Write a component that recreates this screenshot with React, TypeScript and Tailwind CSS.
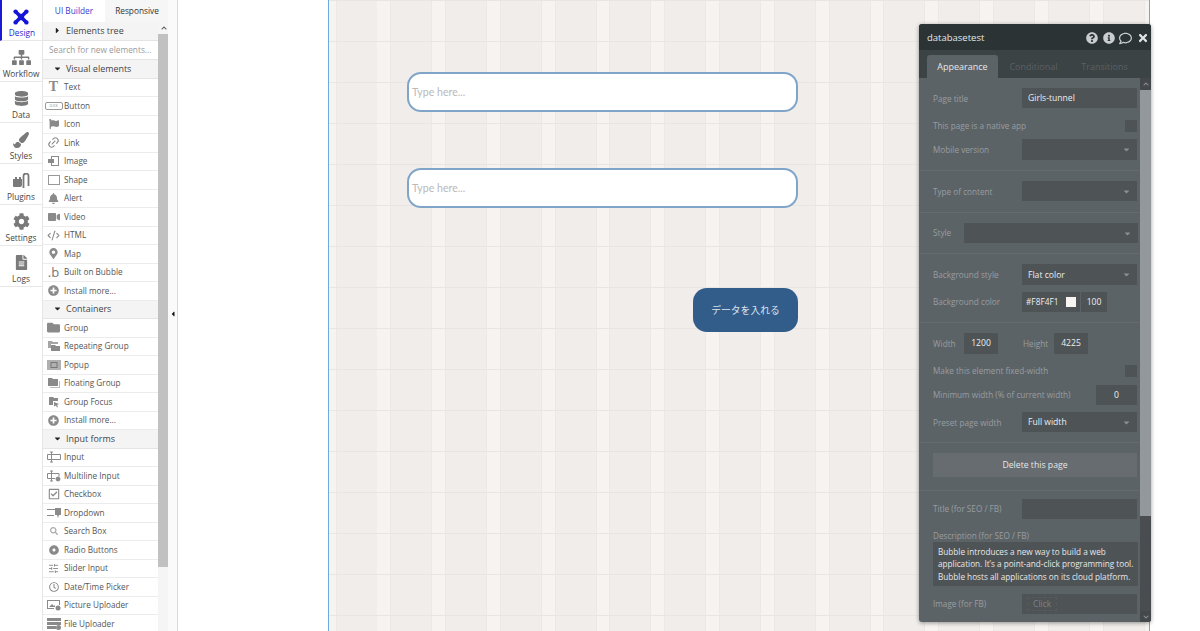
import React from "react";
import { FaCog, FaDatabase, FaFileAlt, FaSitemap, FaPaintBrush, FaFlag, FaBell, FaVideo, FaMapMarkerAlt, FaPlusCircle, FaFolder, FaDotCircle, FaRegClock, FaQuestionCircle, FaInfoCircle, FaTimes, FaCaretDown, FaCaretRight, FaCaretLeft, FaRegComment, FaSearch, FaRegCheckSquare, FaChevronUp, FaChevronDown } from "react-icons/fa";
import { Link2, CodeXml, SlidersHorizontal } from "lucide-react";

const Svg = ({ children }: { children: React.ReactNode }) => (
  <svg width="14" height="12" viewBox="0 0 14 12" fill="#8a8a8a">
    {children}
  </svg>
);

const ImageIcon = () => (
  <Svg>
    <path d="M4 1h8v10H4V8h1v2h6V2H5v2H4z" />
    <path d="M1 4h6v4H1z" />
  </Svg>
);
const FolderStack = () => (
  <Svg>
    <path d="M1 1h4l1 1h5v2H4v4H1z" fill="#a5a5a5" />
    <path d="M4 5h4l1 1h4v5H4z" />
  </Svg>
);
const PopupIcon = () => (
  <Svg>
    <rect x="0" y="1" width="14" height="10" fill="#b0b0b0" />
    <rect x="4" y="3.5" width="6" height="5" fill="none" stroke="#777" />
  </Svg>
);
const FloatingIcon = () => (
  <Svg>
    <path d="M1 1h4l1 1h5v7H1z" />
    <path d="M12 4h1v7H3v-1h9z" fill="#bbb" />
  </Svg>
);
const FocusIcon = () => (
  <Svg>
    <path d="M2 1h4l1 1h4v3H6v4H2z" />
    <path d="M7 6l5 2-2 1 1 2-1 .5-1-2-2 1z" />
  </Svg>
);
const InputIcon = () => (
  <svg width="14" height="12" viewBox="0 0 14 12" fill="none" stroke="#8a8a8a">
    <path d="M4.5 1v10M3 1h3M3 11h3M5 3.5h8.5v5H5M4 3.5H.5v5H4" />
  </svg>
);
const MultilineIcon = () => (
  <svg width="14" height="12" viewBox="0 0 14 12" fill="none" stroke="#8a8a8a">
    <path d="M4.5 1v10M3 1h3M3 11h3M5 3.5h7v3M4 3.5H.5v5H4M5 8.5h3" />
    <circle cx="11" cy="9" r="2" fill="#8a8a8a" />
  </svg>
);
const DropdownIcon = () => (
  <svg width="14" height="12" viewBox="0 0 14 12" fill="#8a8a8a">
    <path d="M0 2h8v1H0zM0 8h7v1H0zM8 1h6v7h-2l-1 3-1-3H8z" />
  </svg>
);
const PictureIcon = () => (
  <svg width="14" height="12" viewBox="0 0 14 12" fill="#8a8a8a">
    <path d="M0 1h13v5h-1V2H1v7h6v1H0z" />
    <path d="M2 8l3-3 2 2 1-1v2H2z" />
    <circle cx="11" cy="9" r="2.5" />
  </svg>
);
const FileIcon = () => (
  <svg width="14" height="12" viewBox="0 0 14 12" fill="#8a8a8a">
    <path d="M0 0h14v3H0zM0 4h14v3H0zM0 8h9v3H0z" />
    <circle cx="11.5" cy="9.5" r="2.5" />
  </svg>
);
const PlugIcon = () => (
  <svg width="17" height="16" viewBox="0 0 17 16" fill="#7a7a7a">
    <path d="M0 6h2V4h2v2h2V4h2v2h1v6a2 2 0 0 1-2 2H1a1 1 0 0 1-1-1z" />
    <path d="M10.5 15V3a2.4 2.4 0 0 1 5 0v10" fill="none" stroke="#7a7a7a" strokeWidth="1.8" />
  </svg>
);
const DesignIcon = () => (
  <svg width="16" height="16" viewBox="0 0 16 16" fill="#1515d8" stroke="#1515d8" className="mt-[1px] -ml-[2px]">
    <path d="M3 3l10 10M13 3L3 13" strokeWidth="3.6" />
    <circle cx="2.6" cy="2.6" r="2.2" stroke="none" />
    <circle cx="13.4" cy="2.6" r="2.2" stroke="none" />
    <circle cx="2.6" cy="13.4" r="2.2" stroke="none" />
    <circle cx="13.4" cy="13.4" r="2.2" stroke="none" />
    <circle cx="8" cy="8" r="3.2" stroke="none" />
  </svg>
);

const rail = [
  { label: "Design", icon: <DesignIcon />, active: true },
  { label: "Workflow", icon: <FaSitemap size={19} color="#7a7a7a" /> },
  { label: "Data", icon: <FaDatabase size={15} color="#7a7a7a" /> },
  { label: "Styles", icon: <FaPaintBrush size={16} color="#7a7a7a" /> },
  { label: "Plugins", icon: <PlugIcon /> },
  { label: "Settings", icon: <FaCog size={17} color="#7a7a7a" /> },
  { label: "Logs", icon: <FaFileAlt size={15} color="#7a7a7a" /> },
];

const gray = "#8a8a8a";
const visual = [
  { label: "Text", icon: <span className="font-['Liberation_Serif',serif] text-[14px] leading-none font-bold text-[#8a8a8a]">T</span> },
  { label: "Button", wide: true },
  { label: "Icon", icon: <FaFlag size={10} color={gray} /> },
  { label: "Link", icon: <Link2 size={13} color={gray} className="-rotate-45" /> },
  { label: "Image", icon: <ImageIcon /> },
  { label: "Shape", shape: true },
  { label: "Alert", icon: <FaBell size={11} color={gray} /> },
  { label: "Video", icon: <FaVideo size={12} color={gray} /> },
  { label: "HTML", icon: <CodeXml size={13} color={gray} /> },
  { label: "Map", icon: <FaMapMarkerAlt size={11} color={gray} /> },
  { label: "Built on Bubble", icon: <span className="text-[13px] leading-none text-[#777]">.b</span> },
  { label: "Install more...", icon: <FaPlusCircle size={11} color={gray} /> },
];
const containers = [
  { label: "Group", icon: <FaFolder size={13} color={gray} /> },
  { label: "Repeating Group", icon: <FolderStack /> },
  { label: "Popup", icon: <PopupIcon /> },
  { label: "Floating Group", icon: <FloatingIcon /> },
  { label: "Group Focus", icon: <FocusIcon /> },
  { label: "Install more...", icon: <FaPlusCircle size={11} color={gray} /> },
];
const inputs = [
  { label: "Input", icon: <InputIcon /> },
  { label: "Multiline Input", icon: <MultilineIcon /> },
  { label: "Checkbox", icon: <FaRegCheckSquare size={12} color={gray} /> },
  { label: "Dropdown", icon: <DropdownIcon /> },
  { label: "Search Box", icon: <FaSearch size={8} color="#aaa" /> },
  { label: "Radio Buttons", icon: <FaDotCircle size={10} color={gray} /> },
  { label: "Slider Input", icon: <SlidersHorizontal size={11} color={gray} /> },
  { label: "Date/Time Picker", icon: <FaRegClock size={10} color={gray} /> },
  { label: "Picture Uploader", icon: <PictureIcon /> },
  { label: "File Uploader", icon: <FileIcon /> },
];

type Item = { label: string; icon?: React.ReactNode; wide?: boolean; shape?: boolean };

const Row = ({ item }: { item: Item }) => (
  <div className="flex h-[18.5px] items-center border-b border-[#ececec] text-[8.2px] text-[#555]">
    <div className="flex w-[21px] shrink-0 items-center justify-center">
      {item.wide ? (
        <span className="flex h-[8px] w-[18px] shrink-0 items-center justify-center rounded-[2px] border border-[#999] text-[3px] text-[#777]">
          CLICK
        </span>
      ) : item.shape ? (
        <span className="h-[10px] w-[12px] border border-[#999] bg-white" />
      ) : (
        item.icon
      )}
    </div>
    <span>{item.label}</span>
  </div>
);

const Section = ({ label, open = true }: { label: string; open?: boolean }) => (
  <div className="flex h-[18.5px] items-center border-b border-[#e4e4e4] bg-[#f4f4f4] pb-px pl-[10px] text-[8.95px] text-[#444]">
    {open ? <FaCaretDown size={9} color="#222" /> : <FaCaretRight size={9} color="#222" />}
    <span className="ml-[4px]">{label}</span>
  </div>
);

const Caret = () => <FaCaretDown size={9} color="#8b9094" className="mr-[6px] ml-auto" />;

const Label = ({ children, className = "" }: { children: React.ReactNode; className?: string }) => (
  <span className={`text-[8.2px] leading-[12px] whitespace-nowrap text-[#989da0] ${className}`}>{children}</span>
);

const Field = ({ className = "", children }: { className?: string; children?: React.ReactNode }) => (
  <div className={`flex items-center bg-[#4e5356] text-[#eceeef] ${className}`}>{children}</div>
);

const Sep = ({ className = "" }: { className?: string }) => <div className={`-ml-[14px] h-px w-[221px] bg-[#646a6e] ${className}`} />;

const PropertyPanel = () => (
  <div className="absolute top-[24px] left-[919px] flex h-[598px] w-[232px] flex-col overflow-hidden rounded-[3px] bg-[#5c6367] font-['Open_Sans',sans-serif] text-[8.6px] shadow-[0_1px_4px_rgba(0,0,0,0.4)]">
    <div className="flex h-[26px] shrink-0 items-center bg-[#2b3335] pt-[2px] pl-[8px]">
      <span className="text-[9.5px] text-[#e5e8e9]">databasetest</span>
      <div className="ml-auto flex items-center text-[#c9cdcf]">
        <span className="flex w-[17px] justify-center"><FaQuestionCircle size={12} /></span>
        <span className="flex w-[17px] justify-center"><FaInfoCircle size={12} /></span>
        <span className="flex w-[17px] justify-center"><FaRegComment size={13} /></span>
        <span className="flex w-[17px] justify-center"><FaTimes size={12} color="#e0e3e4" /></span>
      </div>
    </div>
    <div className="flex h-[28px] shrink-0 items-end bg-[#3c4345] pl-[8px] text-[9px]">
      <div className="flex h-[23px] w-[71px] items-center justify-center rounded-t-[3px] bg-[#5c6367] text-[#e6e8e9]">Appearance</div>
      <div className="flex h-[23px] w-[71px] items-center justify-center text-[#596064]">Conditional</div>
      <div className="flex h-[23px] w-[71px] items-center justify-center text-[#596064]">Transitions</div>
    </div>
    <div className="flex min-h-0 flex-1">
      <div className="flex w-[221px] flex-col pl-[14px]">
        <div className="mt-[10px] flex items-center">
          <Label className="w-[89px] pt-px">Page title</Label>
          <Field className="h-[20px] w-[115px] pt-px pl-[6px]">Girls-tunnel</Field>
        </div>
        <div className="mt-[12px] flex items-center justify-between pr-[3px]">
          <Label>This page is a native app</Label>
          <Field className="h-[12px] w-[12px]" />
        </div>
        <div className="mt-[7px] flex items-center">
          <Label className="w-[89px]">Mobile version</Label>
          <Field className="h-[21px] w-[115px]"><Caret /></Field>
        </div>
        <Sep className="mt-[10px]" />
        <div className="mt-[10px] flex items-center">
          <Label className="w-[89px] pt-px">Type of content</Label>
          <Field className="h-[20px] w-[115px]"><Caret /></Field>
        </div>
        <Sep className="mt-[11px]" />
        <div className="mt-[10px] flex items-center">
          <Label className="w-[31px]">Style</Label>
          <Field className="h-[20px] w-[174px]"><Caret /></Field>
        </div>
        <Sep className="mt-[10px]" />
        <div className="mt-[10px] flex items-center">
          <Label className="w-[89px] pt-px">Background style</Label>
          <Field className="h-[21px] w-[115px] pl-[6px]"><span className="pt-px">Flat color</span><Caret /></Field>
        </div>
        <div className="mt-[7px] flex items-center">
          <Label className="w-[89px]">Background color</Label>
          <Field className="h-[20px] w-[58px] pl-[4px] text-[8.3px]">
            #F8F4F1
            <span className="mr-[4px] ml-auto h-[10px] w-[10px] bg-[#f8f4f1]" />
          </Field>
          <Field className="ml-px h-[20px] w-[26px] justify-center">100</Field>
        </div>
        <Sep className="mt-[10px]" />
        <div className="mt-[10px] flex items-center">
          <Label className="w-[31px]">Width</Label>
          <Field className="h-[21px] w-[34px] justify-center">1200</Field>
          <Label className="ml-[25px] w-[31px]">Height</Label>
          <Field className="h-[21px] w-[34px] justify-center">4225</Field>
        </div>
        <div className="mt-[11px] flex items-center justify-between pr-[3px]">
          <Label>Make this element fixed-width</Label>
          <Field className="h-[12px] w-[12px]" />
        </div>
        <div className="mt-[8px] flex items-center justify-between pr-[3px]">
          <Label>Minimum width (% of current width)</Label>
          <Field className="h-[20px] w-[41px] justify-center">0</Field>
        </div>
        <div className="mt-[7px] flex items-center">
          <Label className="w-[89px] pt-px">Preset page width</Label>
          <Field className="h-[20px] w-[115px] pl-[6px]"><span className="pt-px">Full width</span><Caret /></Field>
        </div>
        <Sep className="mt-[10px]" />
        <div className="mt-[10px] flex h-[24px] w-[204px] items-center justify-center bg-[#666c70] pt-px text-[8.7px] text-[#e6e8e9]">Delete this page</div>
        <Sep className="mt-[13px]" />
        <div className="mt-[8px] flex items-center">
          <Label className="w-[89px]">Title (for SEO / FB)</Label>
          <Field className="h-[20px] w-[115px]" />
        </div>
        <Label className="mt-[11px]">Description (for SEO / FB)</Label>
        <div className="h-[44px] w-[205px] bg-[#4e5356] pt-[4px] pl-[5px] text-[8.2px] leading-[12.4px] whitespace-nowrap text-[#e6e8e9]">
          Bubble introduces a new way to build a web
          <br />
          application. It’s a point-and-click programming tool.
          <br />
          Bubble hosts all applications on its cloud platform.
        </div>
        <div className="mt-[8px] flex items-center">
          <Label className="w-[89px]">Image (for FB)</Label>
          <Field className="h-[20px] w-[115px] pl-[5px]">
            <span className="border border-dashed border-[#565b5e] px-[5px] text-[#7c8285]">Click</span>
          </Field>
        </div>
      </div>
      <div className="flex w-[11px] flex-col bg-[#4a4d50]">
        <div className="flex h-[12px] items-center justify-center bg-[#44484b]"><FaChevronUp size={6} color="#8b9094" /></div>
        <div className="h-[426px] bg-[#92989b]" />
        <div className="mt-auto flex h-[11px] items-center justify-center bg-[#44484b]"><FaChevronDown size={6} color="#8b9094" /></div>
      </div>
    </div>
  </div>
);

const TypeHere = ({ top }: { top: string }) => (
  <div className={`absolute left-[407px] flex h-[40px] w-[391px] items-center rounded-[14px] border-2 border-[#7fa6c9] bg-white pt-px pl-[3px] font-['Lato',sans-serif] text-[10.6px] text-[#b9b9b9] ${top}`}>
    Type here...
  </div>
);

export default function App() {
  return (
    <div className="relative flex h-[631px] w-[1200px] overflow-hidden bg-white font-['Open_Sans',sans-serif]">
      <nav className="w-[42px] shrink-0">
        {rail.map((r) => (
          <div
            key={r.label}
            className={`flex h-[41px] flex-col items-center justify-end border-b border-[#e8e8e8] pb-px text-[8.3px] ${r.active ? "border-l-2 border-l-[#1a1ad6] text-[#2a2ad0]" : "text-[#444]"}`}
          >
            <span className="flex h-[21px] items-center pt-[2px]">{r.icon}</span>
            <span className="leading-[13px]">{r.label}</span>
          </div>
        ))}
      </nav>
      <aside className="flex w-[126px] shrink-0 border-l border-[#e6e6e6]">
        <div className="w-[115px] shrink-0">
          <div className="-mr-[11px] flex h-[22px] text-[8.3px]">
            <div className="flex w-[62px] items-center justify-center text-[#3a3acb]">UI Builder</div>
            <div className="flex flex-1 items-center justify-center bg-[#f6f6f6] text-[#333]">Responsive</div>
          </div>
          <Section label="Elements tree" open={false} />
          <div className="flex h-[19.5px] items-center border-b border-[#e4e4e4] pt-px pl-[6px] text-[8.3px] whitespace-nowrap text-[#9a9a9a]">Search for new elements...</div>
          <Section label="Visual elements" />
          {visual.map((i) => <Row key={i.label} item={i} />)}
          <Section label="Containers" />
          {containers.map((i) => <Row key={i.label} item={i} />)}
          <Section label="Input forms" />
          {inputs.map((i) => <Row key={i.label} item={i} />)}
        </div>
        <div className="mt-[22px] w-[11px] shrink-0 bg-[#f5f5f5]">
          <div className="flex h-[12px] items-center justify-center"><FaChevronUp size={6} color="#555" /></div>
          <div className="h-[533px] bg-[#c1c1c1]" />
        </div>
      </aside>
      <div className="flex w-[10px] shrink-0 items-center justify-center border-r border-[#d9d9d9] bg-[#fafafa] pb-[3px]">
        <FaCaretLeft size={8} color="#111" />
      </div>
      <main className="relative flex-1 pl-[149.5px]">
        <div className="h-full w-[822px] border-x border-[#6ea8e0] bg-[#f1edea] bg-[linear-gradient(#e8e5e3_1px,transparent_1px),repeating-linear-gradient(90deg,#f6f3f0_0,#f6f3f0_6.5px,#ebe8e5_6.5px,#ebe8e5_7.5px,#f0edea_7.5px,#f0edea_47.5px,#ebe8e5_47.5px,#ebe8e5_48.5px,#f6f3f0_48.5px,#f6f3f0_54.8px)] bg-[size:100%_41px,100%_100%]" />
      </main>
      <TypeHere top="top-[72px]" />
      <TypeHere top="top-[168px]" />
      <div className="absolute top-[288px] left-[693px] flex h-[44px] w-[105px] items-center justify-center rounded-[14px] bg-[#325d8b] font-['Noto_Sans_CJK_JP',sans-serif] text-[9.8px] text-[#dbe5ee]">
        データを入れる
      </div>
      <PropertyPanel />
    </div>
  );
}
